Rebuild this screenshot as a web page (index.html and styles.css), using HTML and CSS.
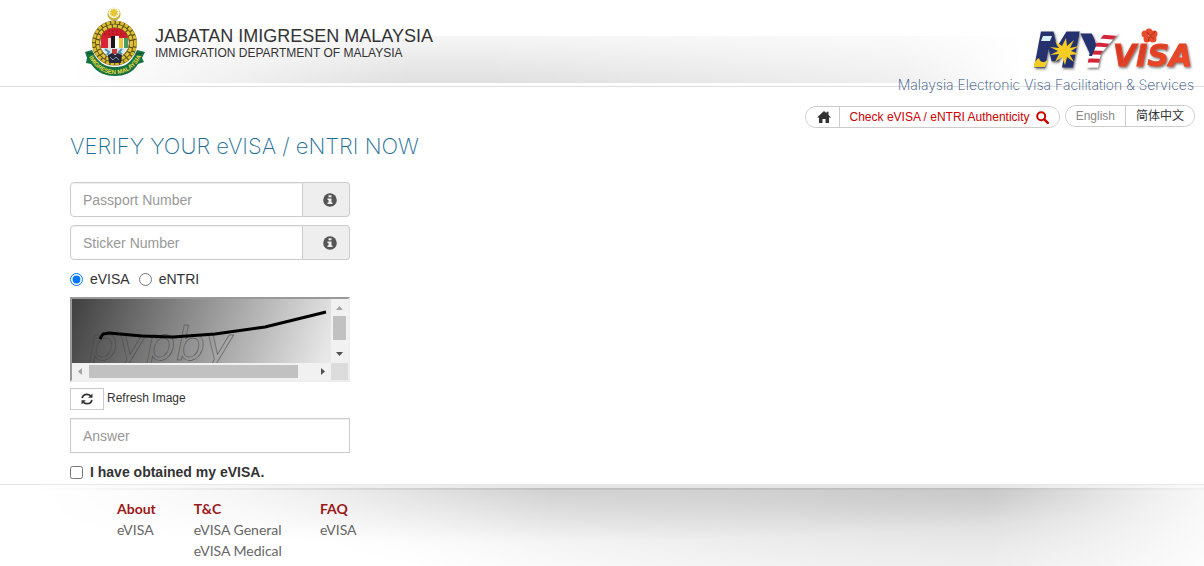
FILE: index.html
```html
<!DOCTYPE html>
<html lang="en">
<head>
<meta charset="utf-8">
<title>Verify your eVISA / eNTRI</title>
<link rel="stylesheet" href="styles.css">
</head>
<body>
<header class="header">
  <div class="brand">
    <svg class="emblem" viewBox="0 0 62 70" aria-hidden="true">
      <circle cx="30" cy="7" r="6.6" fill="#c9b23c"/>
      <circle cx="30" cy="5.6" r="5.6" fill="#fff"/>
      <path d="M30 .8l1 2 2-1-.5 2.200 2.300.2-1.700 1.600 1.500 1.800-2.300.1.4 2.200-1.900-1-.8 2.100-.9-2.100-2 1 .5-2.200-2.400-.1 1.600-1.800-1.700-1.600 2.300-.2-.4-2.200 2 1z" fill="#e8c832"/>
      <path d="M21 17l6 4-2 8-7-2zM39 17l-6 4 2 8 7-2z" fill="#b59a22"/>
      <circle cx="30.500" cy="36" r="18.500" fill="none" stroke="#5c5015" stroke-width="8"/>
      <circle cx="30.500" cy="36" r="20.800" fill="none" stroke="#dcbc2e" stroke-width="3" stroke-dasharray="3.500 1.200"/>
      <circle cx="30.500" cy="36" r="17" fill="none" stroke="#e3c53b" stroke-width="3" stroke-dasharray="4 1.200"/>
      <circle cx="30.500" cy="36" r="14.800" fill="#fff" stroke="#8a7a25"/>
      <path d="M17 31c1-7 7-10 13.500-10S43 24 44 31z" fill="#cf1f2b"/>
      <path d="M20 27h21M24 24h13" stroke="#8d1a20" stroke-dasharray="2 2"/>
      <path d="M17 31h7v10h-7z" fill="#dc2435"/>
      <path d="M24 31h4v10h-4z" fill="#f2d4d4"/>
      <path d="M27 29h4v12h-4z" fill="#171717"/>
      <path d="M31 29h4v12h-4z" fill="#fff"/>
      <path d="M35 31h4v10h-4z" fill="#e5cb3c"/>
      <path d="M40 31h4v10h-4z" fill="#4b9b61"/>
      <path d="M18 41h25l-5 8H23z" fill="#d8e7ec"/>
      <path d="M21 42l4 3-2 3M38 42l-3 3 3 2" stroke="#4b91b4" stroke-width="2" fill="none"/>
      <path d="M28 42h5v5h-5z" fill="#c83a3a"/>
      <path d="M24 48l4-2 3 2 3-2 4 2-1 8h-12z" fill="#25283a"/>
      <path d="M26 50l3 3 3-3 3 3" stroke="#8993a4" fill="none"/>
      <path d="M1 45l7-2 3 6c6 9 13 11 20 11s14-2 19-11l3-6 8 2-3 6 2 4-6 2C49 66 40 69 31 69S13 66 7 57l-5-1 1-5z" fill="#157243"/>
      <path d="M3 46l7 1M59 46l-7 1" stroke="#0c4e2c"/>
      <path id="ribbon" d="M5 50Q14 67 31 67T58 48" fill="none"/>
      <text class="ribbon-text"><textPath href="#ribbon">IMIGRESEN MALAYSIA</textPath></text>
    </svg>
    <div>
      <div class="brand-name">JABATAN IMIGRESEN MALAYSIA</div>
      <div class="brand-sub">IMMIGRATION DEPARTMENT OF MALAYSIA</div>
    </div>
  </div>
  <div class="product">
    <svg class="logo" viewBox="0 0 164 46" role="img" aria-label="MYVISA">
      <defs>
        <linearGradient id="red" x2="1" y2="1"><stop stop-color="#cf2f1f"/><stop offset="1" stop-color="#f2552d"/></linearGradient>
        <pattern id="stripe" width="170" height="60" patternUnits="userSpaceOnUse">
          <path fill="#fff" d="M0 0h170v60H0z"/>
          <path stroke="#d4283b" stroke-width="4" fill="none" d="M50 10q22-2 55 3M50 18q22-2 50 4M50 26q22-2 50 4M50 34q22-2 50 4"/>
          <path fill="#28336f" d="M40 5h24l2 14-4 10H40z"/>
        </pattern>
        <filter id="shadow" x="-10%" y="-20%" width="125%" height="150%"><feDropShadow dx="1" dy="1.500" stdDeviation="1" flood-color="#333" flood-opacity=".7"/></filter>
      </defs>
      <g class="logo-type" filter="url(#shadow)">
        <text x="5" y="39" font-size="44" fill="#28336f" stroke="#28336f" stroke-width="3">M</text>
        <text x="50" y="39" font-size="43" fill="url(#stripe)" stroke="url(#stripe)" stroke-width="3">Y</text>
        <text x="83" y="39" font-size="30" fill="url(#red)" stroke="#e64627">VISA</text>
      </g>
      <path fill="#f3cd25" d="M36 11l1 8 7-6-4 8 9-2-8 5 8 3-9 1 4 7-7-5-2 8-3-8-7 5 4-8-9 1 8-4-8-4 9 1-4-7 7 5zM4 39c0-4 3-7 5-8 1 5 5 5 9 2l-3 7H4z"/>
      <path fill="#d9eff3" d="M13 9h9l-2 5h-9z"/>
      <g fill="#e84a2b"><circle cx="119" cy="5" r="3.500"/><circle cx="124" cy="7" r="3.500"/><circle cx="123" cy="12" r="3.500"/><circle cx="117" cy="12" r="3.500"/><circle cx="115" cy="7" r="3.500"/></g>
      <path d="M120 9l6-5M120 9l-3-4M120 9l-2 5M120 9l4 3" stroke="#9c2519" stroke-width=".8"/>
    </svg>
    <div class="tagline">Malaysia Electronic Visa Facilitation &amp; Services</div>
  </div>
</header>

<nav class="toolbar">
  <div class="pill">
    <a class="pill-item home" href="#" aria-label="Home"><svg width="14" height="12" viewBox="0 0 14 12"><path fill="#333" d="M7 0L0 6.500h2V12h3.500V8h3v4H12V6.500h2L11.500 4V.8h-2v1.500z"/></svg></a>
    <a class="pill-item check" href="#">Check eVISA / eNTRI Authenticity
      <svg width="13" height="13" viewBox="0 0 13 13"><circle cx="5.200" cy="5.200" r="4" fill="none" stroke="#c00" stroke-width="2"/><path d="M8.300 8.300l3.500 3.500" stroke="#c00" stroke-width="2.400" stroke-linecap="round"/></svg></a>
  </div>
  <div class="pill lang">
    <button class="pill-item" type="button" disabled>English</button>
    <button class="pill-item zh" type="button" lang="zh">简体中文</button>
  </div>
</nav>

<main class="main">
  <h1 class="title">VERIFY YOUR eVISA / eNTRI NOW</h1>
  <form class="form">
    <div class="group">
      <input class="field" type="text" placeholder="Passport Number" aria-label="Passport Number">
      <span class="addon"><svg width="14" height="14" viewBox="0 0 14 14"><circle cx="7" cy="7" r="6.800" fill="#555"/><path fill="#eee" d="M5.500 2.300h3v2h-3zM4.500 5.500h4v4h1V11h-5V9.500h1V7h-1z"/></svg></span>
    </div>
    <div class="group">
      <input class="field" type="text" placeholder="Sticker Number" aria-label="Sticker Number">
      <span class="addon"><svg width="14" height="14" viewBox="0 0 14 14"><circle cx="7" cy="7" r="6.800" fill="#555"/><path fill="#eee" d="M5.500 2.300h3v2h-3zM4.500 5.500h4v4h1V11h-5V9.500h1V7h-1z"/></svg></span>
    </div>
    <div class="radios">
      <label><input type="radio" name="type" checked>eVISA</label>
      <label><input type="radio" name="type">eNTRI</label>
    </div>
    <div class="captcha">
      <svg class="captcha-view" viewBox="0 0 259 64" preserveAspectRatio="xMinYMin slice">
        <defs><linearGradient id="shade" gradientUnits="userSpaceOnUse" x1="0" y1="0" x2="246" y2="84"><stop stop-color="#404040"/><stop offset="1" stop-color="#e8e8e8"/></linearGradient></defs>
        <path fill="url(#shade)" d="M0 0h259v64H0z"/>
        <text class="captcha-text" x="16" y="61">pypby</text>
        <path d="M28 40l3-5 6-1 33 3 31 1 42-3 50-7 61-15" fill="none" stroke="#000" stroke-width="3"/>
      </svg>
      <svg class="vbar" viewBox="0 0 17 64"><path fill="#f1f1f1" d="M0 0h17v64H0z"/><path fill="#a3a3a3" d="M5 11h7L8.500 7z"/><path fill="#c1c1c1" d="M2 17h13v24H2z"/><path fill="#505050" d="M5 53h7l-3.500 4z"/></svg>
      <div class="hbar">
        <svg width="17" height="17" viewBox="0 0 17 17"><path fill="#a3a3a3" d="M10 5v7L6 8.500z"/></svg>
        <span class="track"><span class="thumb"></span></span>
        <svg width="17" height="17" viewBox="0 0 17 17"><path fill="#505050" d="M7 5v7l4-3.500z"/></svg>
      </div>
      <div class="corner"></div>
    </div>
    <div class="refresh">
      <button class="refresh-btn" id="refresh" type="button" aria-label="Refresh"><svg width="12" height="12" viewBox="0 0 12 12"><path d="M1.200 5.200C1.500 2.700 3.500 1.300 6 1.300c1.500 0 2.700.6 3.600 1.600M10.800 6.800C10.500 9.300 8.500 10.700 6 10.700c-1.500 0-2.700-.6-3.600-1.600" fill="none" stroke="#333" stroke-width="1.700"/><path fill="#333" d="M11.500.5v4.300H7.200zM.5 11.500V7.200h4.300z"/></svg></button>
      <label for="refresh">Refresh Image</label>
    </div>
    <input class="field answer" type="text" placeholder="Answer" aria-label="Answer">
    <label class="obtained"><input type="checkbox">I have obtained my eVISA.</label>
  </form>
</main>

<footer class="footer">
  <div><h2>About</h2><a href="#">eVISA</a></div>
  <div><h2>T&amp;C</h2><a href="#">eVISA General</a><a href="#">eVISA Medical</a></div>
  <div><h2>FAQ</h2><a href="#">eVISA</a></div>
</footer>
</body>
</html>
```
FILE: styles.css
```css
* { box-sizing: border-box; }
body {
  margin: 0;
  min-height: 100vh;
  display: flex;
  flex-direction: column;
  background: #fff;
  color: #333;
  font: 14px/20px "Liberation Sans", Arial, sans-serif;
}
svg { display: block; flex: none; }
a { text-decoration: none; }

.header {
  display: flex;
  justify-content: space-between;
  height: 87px;
  padding: 7px 10px 0 84px;
  border-bottom: 1px solid #ddd;
  background:
    linear-gradient(90deg, #fff 6%, rgba(255, 255, 255, 0) 34%, rgba(255, 255, 255, 0) 40%, rgba(255, 255, 255, .5) 75%, #fff 85%) 0 36px / 100% 47px no-repeat,
    linear-gradient(#f6f6f6, #dfdfdf) 0 36px / 100% 47px no-repeat;
}
.brand { display: flex; gap: 9px; }
.brand > div { padding-top: 19px; }
.emblem { width: 62px; height: 70px; overflow: visible; }
.ribbon-text { font: bold 6px "Liberation Sans", sans-serif; fill: #f0dc3c; }
.brand-name { font-size: 18px; line-height: 20px; }
.brand-sub { font-size: 12px; line-height: 14px; }
.product { display: flex; flex-direction: column; align-items: flex-end; padding-top: 20px; }
.logo { width: 164px; height: 46px; overflow: visible; }
.logo-type { font-family: "DejaVu Sans", sans-serif; font-weight: bold; font-style: italic; }
.tagline { font: 200 14px/24px Inter, sans-serif; color: #1f497d; white-space: nowrap; }

.toolbar { display: flex; justify-content: flex-end; gap: 5px; padding: 18px 9px 0 0; }
.pill { display: flex; height: 22px; margin-top: 1px; border: 1px solid #ccc; border-radius: 11px; overflow: hidden; }
.pill.lang { margin-top: 0; }
.pill-item {
  display: flex;
  align-items: center;
  gap: 6px;
  padding: 0 10px;
  border: 0;
  background: #fff;
  color: #333;
  font: 12px/20px "Liberation Sans", "Noto Sans CJK SC", sans-serif;
}
.pill-item + .pill-item { border-left: 1px solid #ccc; }
.pill-item:disabled { color: #888; }
.home { padding: 0 8px 0 11px; }
.check { padding: 0 10px; color: #c00; }
.zh { padding: 0 10px; }

.main { padding: 3px 70px 0; }
.title { margin: 0 0 21px; font: 200 22px/30px Inter, sans-serif; color: #1b6d95; }
.form { display: flex; flex-direction: column; width: 280px; }
.group { display: flex; margin-bottom: 8px; }
.field {
  flex: 1;
  min-width: 0;
  height: 35px;
  padding: 6px 12px;
  border: 1px solid #ccc;
  border-radius: 4px 0 0 4px;
  font: 14px/20px "Liberation Sans", Arial, sans-serif;
  box-shadow: inset 0 1px 1px rgba(0, 0, 0, .07);
}
.field::placeholder { color: #999; }
.addon {
  display: flex;
  align-items: center;
  padding: 0 12px 0 20px;
  border: 1px solid #ccc;
  border-left: 0;
  border-radius: 0 4px 4px 0;
  background: #eee;
}
.radios { display: flex; gap: 9px; margin: 1px 0 8px; }
.radios label, .obtained { display: flex; align-items: center; gap: 7px; }
.radios input, .obtained input { width: 13px; height: 13px; margin: 0; }
.captcha {
  display: grid;
  grid-template: 64px 17px / 1fr 17px;
  border: 2px solid;
  border-color: #999 #eee #eee #999;
}
.captcha-view { width: 100%; height: 64px; }
.captcha-text { font: italic 47px "DejaVu Sans", sans-serif; fill: none; stroke: #444; stroke-width: .5px; }
.vbar { width: 17px; height: 64px; }
.hbar { display: flex; align-items: center; background: #f1f1f1; }
.track { flex: 1; }
.thumb { display: block; width: 93%; height: 13px; background: #c1c1c1; }
.corner { background: #dcdcdc; }
.refresh { display: flex; gap: 3px; margin: 6px 0 8px; font-size: 12px; }
.refresh-btn {
  display: flex;
  align-items: center;
  justify-content: center;
  width: 34px;
  height: 22px;
  padding: 0;
  border: 1px solid #ccc;
  background: #fff;
}
.answer { flex: none; border-radius: 0; }
.obtained { margin-top: 9px; font-weight: bold; }

.footer {
  display: flex;
  flex: 1;
  gap: 38px;
  margin-top: 2px;
  padding: 13px 117px 6px;
  border-top: 1px solid #e8e8e8;
  background:
    linear-gradient(90deg, #fff 3%, rgba(255, 255, 255, 0) 46%, rgba(255, 255, 255, 0) 82%, rgba(255, 255, 255, .8)) 0 0 / 100% 100%,
    linear-gradient(#e6e6e6, #e6e6e6) 0 0 / 100% 3px no-repeat,
    linear-gradient(#bcbcbc, #c4c4c4) 0 3px / 100% 2px no-repeat,
    radial-gradient(ellipse 60% 70% at 40% 0, rgba(0, 0, 0, .14), rgba(0, 0, 0, 0)),
    radial-gradient(ellipse 66% 160% at 86% 0, #cdcdcd, #e6e6e6 40%, #fff);
  font: 14px/21px Lato, sans-serif;
}
.footer h2 { margin: 0; font: bold 14px/21px Lato, sans-serif; color: #9c1717; }
.footer a { display: block; color: #666; }
```
